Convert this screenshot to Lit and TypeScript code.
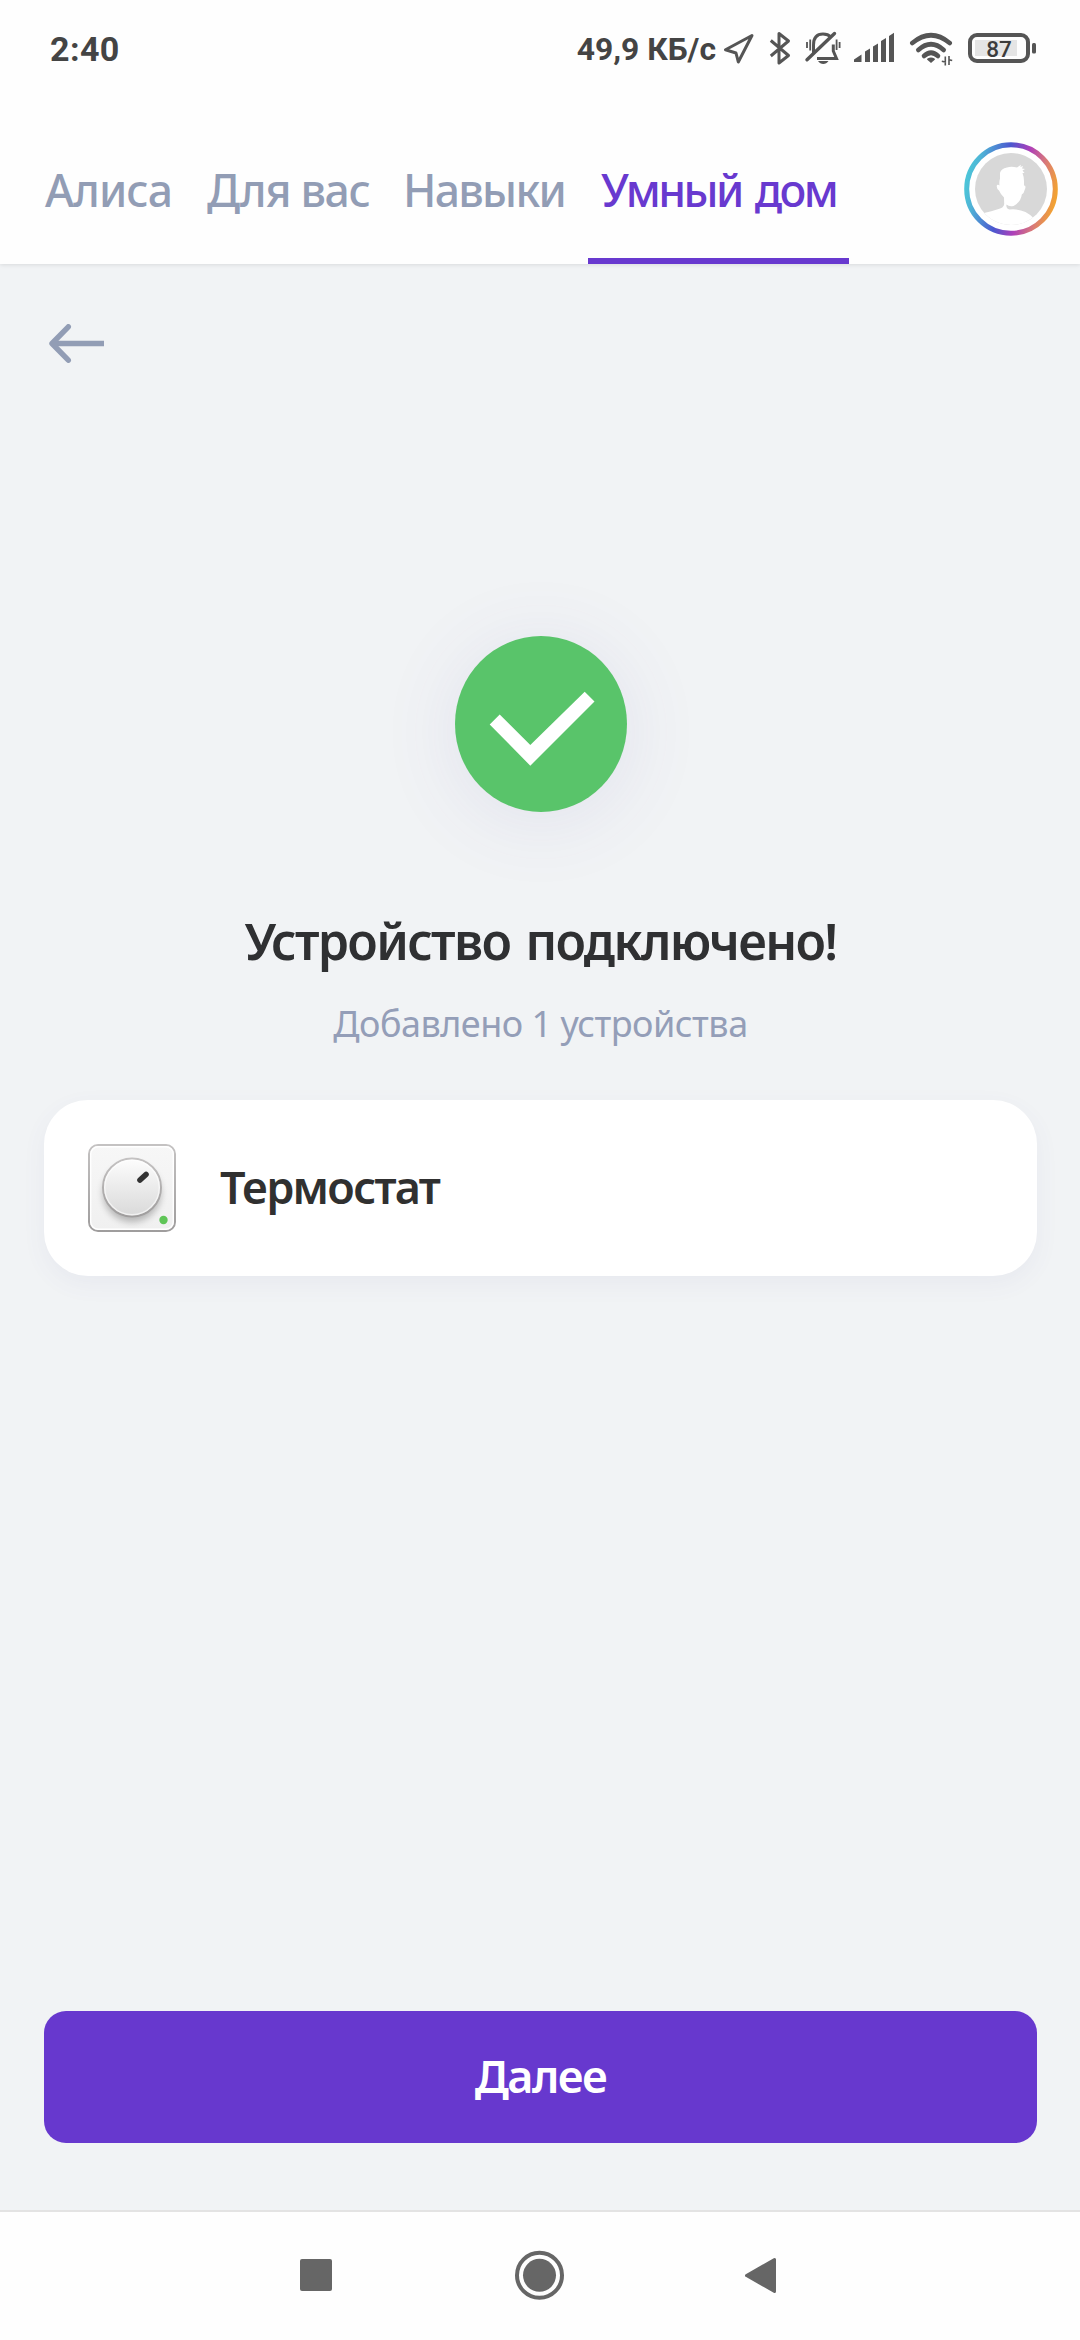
import { LitElement, html, css, svg } from "lit";
import { customElement, property } from "lit/decorators.js";
import { classMap } from "lit/directives/class-map.js";

@customElement("status-bar")
class StatusBar extends LitElement {
  static styles = css`
    :host {
      display: flex;
      align-items: center;
      height: 98px;
      padding: 0 43px 0 50px;
      box-sizing: border-box;
      color: #444;
      font-family: Roboto, "Liberation Sans", sans-serif;
      font-weight: 700;
      white-space: nowrap;
    }
    svg { display: block; flex: none; }
    .time { font-size: 34px; flex: 1; letter-spacing: 0.4px; }
    .speed { font-size: 31.8px; margin-right: 5px; }
    .battery-text { font: 500 22.5px Roboto, sans-serif; fill: #3c3c3c; }
  `;
  render() {
    return html`
      <span class="time">2:40</span>
      <span class="speed">49,9 КБ/с</span>
      <svg width="316" height="44" viewBox="720 27 316 44" fill="none" stroke="#555" stroke-width="3">
        <path d="M751 35.5 L724.5 49.7 L735 53 L737.3 62 Z" stroke-linejoin="round" />
        <path d="M769.8 40.5 L787.5 55.5 L778 63 V33.5 L787.5 41 L769.8 56" stroke-linejoin="round" />
        <g>
          <path d="M812.5 53 V45 C812.5 36.5 816.5 34 822 34 C825.5 34 828 35 829.8 37" />
          <path d="M832.3 44.5 V51 L835.5 58.5 H816" />
          <path d="M806 59.8 L833.5 33.5" stroke-width="3.4" stroke-linecap="round" />
          <path d="M806 42 V48 M809.2 39.5 V50.5 M835.6 39.5 V50 M838.6 42 V48" stroke-width="1.8" />
          <path d="M817 61 H827.5 C825 65 819.5 65 817 61 Z" fill="#555" stroke="none" />
        </g>
        <path fill="#555" stroke="none"
          d="M853 62 V59.5 L860.5 54.5 V62 Z M864 62 V51.5 L869 48.5 V62 Z M872 62 V46.5 L877 43.5 V62 Z M880 62 V41 L885 38 V62 Z M888 62 V36 L893 32.8 V62 Z" />
        <g stroke-width="4.6">
          <path d="M911.3 43 Q930 27.5 948.7 43" stroke-linecap="round" />
          <path d="M917.3 50 Q930 38.5 942.7 50" stroke-linecap="round" />
          <path d="M923 56 Q930 49.5 937 56" stroke-linecap="round" />
          <path d="M930 63 L926 59.5 Q926 57.6 930 57.4 Q934 57.6 934 59.5 Z" fill="#555" stroke="none" />
          <path d="M940.8 61.3 L944.3 62 V56.5 V65.5 M951.2 60.5 L948 59.8 V65 V56" stroke-width="1.6" />
        </g>
        <rect x="969" y="35" width="58" height="26" rx="7" stroke-width="4" />
        <rect x="974" y="40" width="42" height="16" fill="#e5e5e5" stroke="none" />
        <rect x="1031" y="43" width="4" height="10.5" rx="1.5" fill="#555" stroke="none" />
        <text class="battery-text" x="998" y="56.7" text-anchor="middle" stroke="none">87</text>
      </svg>
    `;
  }
}

@customElement("user-avatar")
class UserAvatar extends LitElement {
  static styles = css`
    :host { display: block; width: 94px; height: 94px; }
    svg { display: block; }
  `;
  render() {
    return html`
      <svg width="94" height="94" viewBox="0 0 94 94">
        <defs>
          <linearGradient id="ring" x1="0" y1="0.4" x2="1" y2="0.6">
            <stop offset="0" stop-color="#4cc4d8" />
            <stop offset="0.1" stop-color="#4fb4d6" />
            <stop offset="0.4" stop-color="#4b57cf" />
            <stop offset="0.62" stop-color="#ae3fb9" />
            <stop offset="0.82" stop-color="#d97a78" />
            <stop offset="1" stop-color="#f2a233" />
          </linearGradient>
          <clipPath id="disc"><circle cx="47" cy="47" r="36" /></clipPath>
        </defs>
        <circle cx="47" cy="47" r="44.3" fill="#fff" stroke="url(#ring)" stroke-width="5" />
        <g clip-path="url(#disc)">
          <rect width="94" height="94" fill="#d8d8d8" />
          <path fill="#fff"
            d="M0 94 L0 74 L20 71 Q28 69 33 67.5 Q40 66 40.2 62 L40 55.5 Q36.5 52 35 48.5 Q32 46 33 43 Q34.5 42.4 35.5 43.5 Q35 40 36 36.5 Q36 32 36 31 Q37 26.5 43 25.5 Q47 24 53 25.5 L57 22.8 L56.3 25 L59 24 L58 26.5 L61 27 L58.5 28.5 L60.5 31 L58.5 31 Q60 35 60 39 L60 43.5 Q62.5 43.5 60.8 47.5 Q60 51.5 57.8 52.5 Q57 60 49.5 64 Q45 65 42.5 62.5 Q41.8 66.5 45.5 67.5 Q60 66 69.5 76 L94 94 Z" />
        </g>
      </svg>
    `;
  }
}

@customElement("tab-bar")
class TabBar extends LitElement {
  @property({ type: Array }) tabs: string[] = ["Алиса", "Для вас", "Навыки", "Умный дом"];
  @property({ type: Number }) active = 3;
  static styles = css`
    :host {
      display: flex;
      justify-content: space-between;
      height: 166px;
      padding: 0 22px 0 32px;
      box-sizing: border-box;
      background: #fefefe;
      box-shadow: 0 1px 4px rgba(0, 0, 0, 0.1);
      clip-path: inset(0 0 -8px 0);
    }
    .tabs {
      display: grid;
      grid-template-columns: 162px 196px 198px 261px;
    }
    .tab {
      box-sizing: border-box;
      height: 166px;
      padding: 24px 0 0 13px;
      border-bottom: 6px solid transparent;
      line-height: 136px;
      font-size: 44.5px;
      font-weight: 550;
      letter-spacing: -1.7px;
      color: #929db5;
      white-space: nowrap;
    }
    .tab:nth-child(1) { letter-spacing: -0.9px; }
    .tab:nth-child(2) { letter-spacing: -1.3px; }
    .on {
      color: #6839cf;
      border-color: #6839cf;
      letter-spacing: -2.6px;
      word-spacing: 4px;
    }
    user-avatar { margin-top: 44px; }
  `;
  render() {
    return html`
      <div class="tabs">
        ${this.tabs.map(
          (t, i) => html`<div class=${classMap({ tab: true, on: i === this.active })}>${t}</div>`
        )}
      </div>
      <user-avatar></user-avatar>
    `;
  }
}

const thermostat = svg`
  <defs>
    <linearGradient id="plate" x1="0" y1="0" x2="0" y2="1">
      <stop offset="0" stop-color="#f7f7f7" /><stop offset="1" stop-color="#f0f0f0" />
    </linearGradient>
    <linearGradient id="edge" x1="0" y1="0" x2="0" y2="1">
      <stop offset="0" stop-color="#c4c2c2" /><stop offset="1" stop-color="#9f9d9d" />
    </linearGradient>
    <linearGradient id="knob" x1="0" y1="0" x2="0" y2="1">
      <stop offset="0" stop-color="#fdfdfd" /><stop offset="1" stop-color="#d9d9d9" />
    </linearGradient>
    <filter id="soft" x="-30%" y="-30%" width="160%" height="160%"><feGaussianBlur stdDeviation="3.5" /></filter>
  </defs>
  <rect x="1" y="1" width="86" height="86" rx="9" fill="url(#plate)" stroke="url(#edge)" stroke-width="2" />
  <rect x="2.7" y="2.7" width="82.6" height="82.6" rx="7.5" fill="none" stroke="#fff" stroke-width="1.4" />
  <circle cx="44" cy="49" r="29" fill="#000" opacity="0.25" filter="url(#soft)" />
  <circle cx="44" cy="43.5" r="29" fill="url(#knob)" stroke="url(#edge)" stroke-width="2" />
  <circle cx="44" cy="43.5" r="27.3" fill="none" stroke="#fff" stroke-opacity="0.6" stroke-width="1.4" />
  <path d="M52 36 L58 30.5" stroke="#333" stroke-width="5.6" stroke-linecap="round" />
  <circle cx="75.5" cy="76" r="4.2" fill="#5fc557" />
`;

@customElement("app-root")
class AppRoot extends LitElement {
  static styles = css`
    :host {
      display: flex;
      flex-direction: column;
      width: 1080px;
      height: 2340px;
      background: #fefefe;
      font-family: "Noto Sans", "Open Sans", sans-serif;
      overflow: hidden;
    }
    svg { display: block; }
    tab-bar { flex: none; z-index: 1; }
    .content {
      flex: 1;
      display: flex;
      flex-direction: column;
      background: #f1f3f5;
      padding: 60px 43px 67px 44px;
      border-bottom: 2px solid #e3e3e3;
    }
    .success {
      width: 172px;
      height: 176px;
      margin: 273px auto 0 411px;
      border-radius: 50%;
      background: #59c46a;
      box-shadow: 0 8px 80px rgba(90, 80, 170, 0.1);
    }
    .title {
      margin-top: 94px;
      line-height: 70px;
      text-align: center;
      font-size: 50px;
      font-weight: 560;
      letter-spacing: -1.7px;
      word-spacing: 4px;
      color: #2f3032;
      white-space: nowrap;
    }
    .subtitle {
      margin-top: 23px;
      line-height: 50px;
      text-align: center;
      font-size: 36px;
      letter-spacing: -0.5px;
      color: #949eb8;
      white-space: nowrap;
    }
    .card {
      display: flex;
      align-items: center;
      gap: 44px;
      height: 176px;
      margin-top: 51px;
      padding: 0 44px;
      box-sizing: border-box;
      border-radius: 44px;
      background: #fff;
      box-shadow: 0 8px 24px rgba(90, 80, 150, 0.06);
    }
    .device {
      padding-bottom: 3px;
      font-size: 45px;
      font-weight: 570;
      letter-spacing: -1.7px;
      color: #303030;
    }
    .next {
      display: block;
      margin-top: auto;
      height: 132px;
      padding: 0 0 3px;
      border: 0;
      border-radius: 22px;
      background: #6738ce;
      color: #fff;
      font: 560 45px "Noto Sans", "Open Sans", sans-serif;
      letter-spacing: -1.5px;
    }
    .nav { flex: none; height: 128px; background: #fefefe; }
  `;
  render() {
    return html`
      <status-bar></status-bar>
      <tab-bar></tab-bar>
      <main class="content">
        <svg width="60" height="39" viewBox="0 0 60 39" fill="none" stroke="#929db5" stroke-width="5.4">
          <path d="M60 19.5 H8" />
          <path d="M24.3 2.8 L8 19.5 L24.3 36.2" stroke-linecap="round" stroke-linejoin="round" />
        </svg>
        <div class="success">
          <svg width="172" height="176" viewBox="455 636 172 176">
            <path fill="#fff" d="M489.7 724.5 L499.7 714.5 L530.3 745 L584.7 691.7 L594.5 701.6 L530.3 765.7 Z" />
          </svg>
        </div>
        <div class="title">Устройство подключено!</div>
        <div class="subtitle">Добавлено 1 устройства</div>
        <div class="card">
          <svg width="88" height="88" viewBox="0 0 88 88">${thermostat}</svg>
          <span class="device">Термостат</span>
        </div>
        <button class="next">Далее</button>
      </main>
      <div class="nav">
        <svg width="1080" height="128" viewBox="0 2212 1080 128" fill="#666">
          <rect x="300" y="2259" width="32" height="32" rx="2" />
          <circle cx="539.5" cy="2275.3" r="22.5" fill="none" stroke="#666" stroke-width="4" />
          <circle cx="539.5" cy="2275.3" r="16.5" />
          <path d="M774.5 2259.5 V2291.5 L746.5 2275.5 Z" stroke="#666" stroke-width="3" stroke-linejoin="round" />
        </svg>
      </div>
    `;
  }
}
